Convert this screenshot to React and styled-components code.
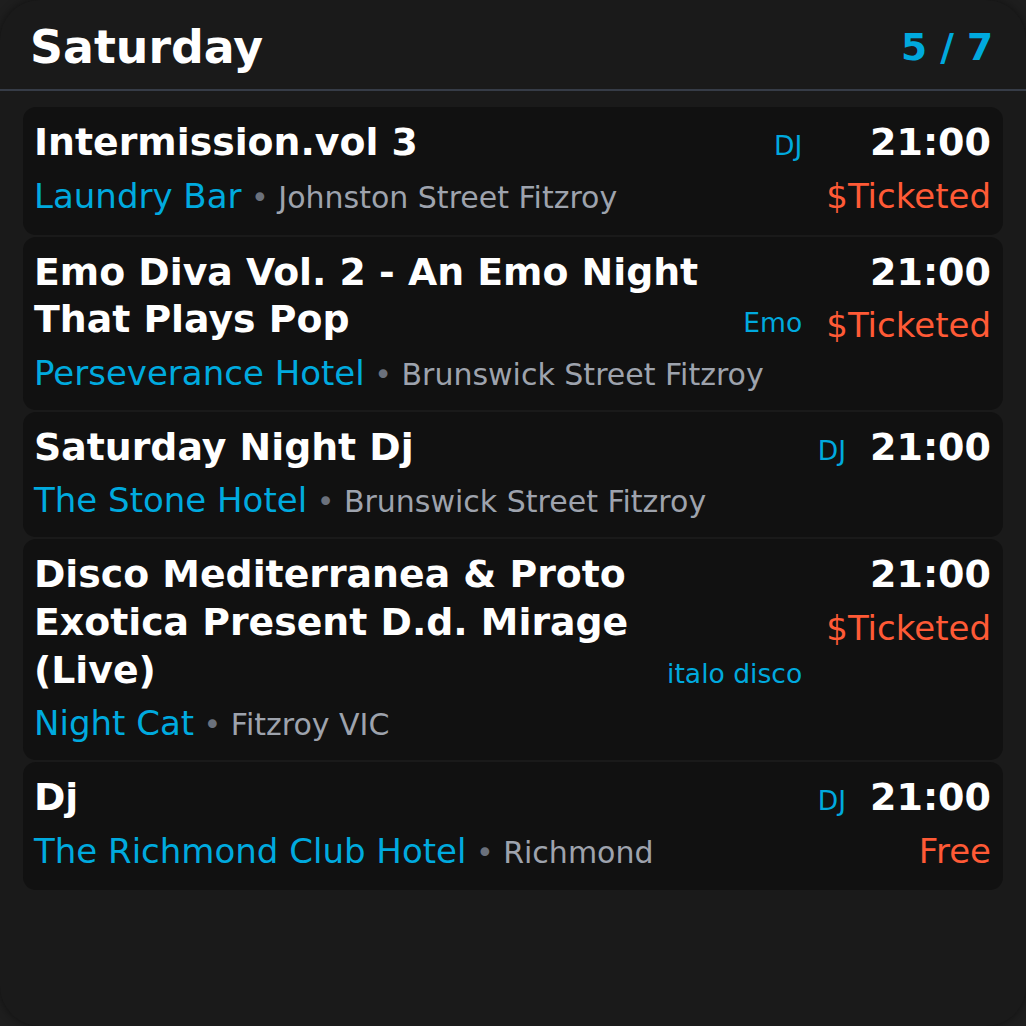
import styled, { createGlobalStyle } from "styled-components";

const GlobalStyle = createGlobalStyle`
  html, body {
    margin: 0;
    padding: 0;
    background: #1e1e1e;
  }
  * { box-sizing: border-box; }
`;

const Panel = styled.div`
  height: 100vh;
  background: #1a1a1a;
  border-radius: 40px;
  box-shadow: 0 0 10px rgba(0, 0, 0, 0.45);
  font-family: "DejaVu Sans", Verdana, sans-serif;
  color: #fff;
  overflow: hidden;
`;

const Header = styled.header`
  height: 91px;
  display: flex;
  align-items: center;
  justify-content: space-between;
  padding: 4px 33px 0 30px;
  border-bottom: 2px solid #363c47;
`;

const Day = styled.h1`
  margin: 0;
  font-size: 45.8px;
  font-weight: bold;
`;

const Counter = styled.span`
  font-size: 37.5px;
  font-weight: bold;
  color: #00a9de;
`;

const List = styled.div`
  display: flex;
  flex-direction: column;
  gap: 2px;
  padding: 16px 23px 0;
`;

const Card = styled.div`
  display: flex;
  gap: 24px;
  padding: 12px 12px 14px 11px;
  background: #111111;
  border-radius: 13px;
`;

const Main = styled.div`
  flex: 1;
  min-width: 0;
  display: flex;
  flex-direction: column;
  gap: 8px;
`;

const TitleRow = styled.div`
  display: flex;
  align-items: last baseline;
  gap: 16px;
`;

const Title = styled.div`
  flex: 1;
  font-size: 37.8px;
  line-height: 47.6px;
  font-weight: bold;
`;

const Tag = styled.span`
  flex-shrink: 0;
  font-size: 26.6px;
  color: #00a9de;
`;

const Venue = styled.div`
  font-size: 34px;
  line-height: 43px;
  color: #00aadf;
  white-space: nowrap;
`;

const Place = styled.span`
  font-size: 30px;
  color: #9ea3ad;
`;

const Dot = styled.span`
  color: #6b717c;
`;

const Side = styled.div`
  display: flex;
  flex-direction: column;
  align-items: flex-end;
  gap: 8px;
`;

const Time = styled.div`
  font-size: 38px;
  line-height: 47.6px;
  font-weight: bold;
`;

const Price = styled.div`
  font-size: 34px;
  line-height: 43px;
  padding-bottom: 3px;
  color: #ff5a36;
`;

const events = [
  { title: "Intermission.vol 3", tag: "DJ", venue: "Laundry Bar", place: "Johnston Street Fitzroy", time: "21:00", price: "$Ticketed" },
  { title: "Emo Diva Vol. 2 - An Emo Night That Plays Pop", tag: "Emo", venue: "Perseverance Hotel", place: "Brunswick Street Fitzroy", time: "21:00", price: "$Ticketed" },
  { title: "Saturday Night Dj", tag: "DJ", venue: "The Stone Hotel", place: "Brunswick Street Fitzroy", time: "21:00" },
  { title: "Disco Mediterranea & Proto Exotica Present D.d. Mirage (Live)", tag: "italo disco", venue: "Night Cat", place: "Fitzroy VIC", time: "21:00", price: "$Ticketed" },
  { title: "Dj", tag: "DJ", venue: "The Richmond Club Hotel", place: "Richmond", time: "21:00", price: "Free" },
];

function EventCard({ ev }) {
  return (
    <Card>
      <Main>
        <TitleRow>
          <Title>{ev.title}</Title>
          <Tag>{ev.tag}</Tag>
        </TitleRow>
        <Venue>
          {ev.venue}
          <Place>
            <Dot> • </Dot>
            {ev.place}
          </Place>
        </Venue>
      </Main>
      <Side>
        <Time>{ev.time}</Time>
        {ev.price && <Price>{ev.price}</Price>}
      </Side>
    </Card>
  );
}

export default function App() {
  return (
    <>
      <GlobalStyle />
      <Panel>
        <Header>
          <Day>Saturday</Day>
          <Counter>5 / 7</Counter>
        </Header>
        <List>
          {events.map((ev, i) => (
            <EventCard key={i} ev={ev} />
          ))}
        </List>
      </Panel>
    </>
  );
}
